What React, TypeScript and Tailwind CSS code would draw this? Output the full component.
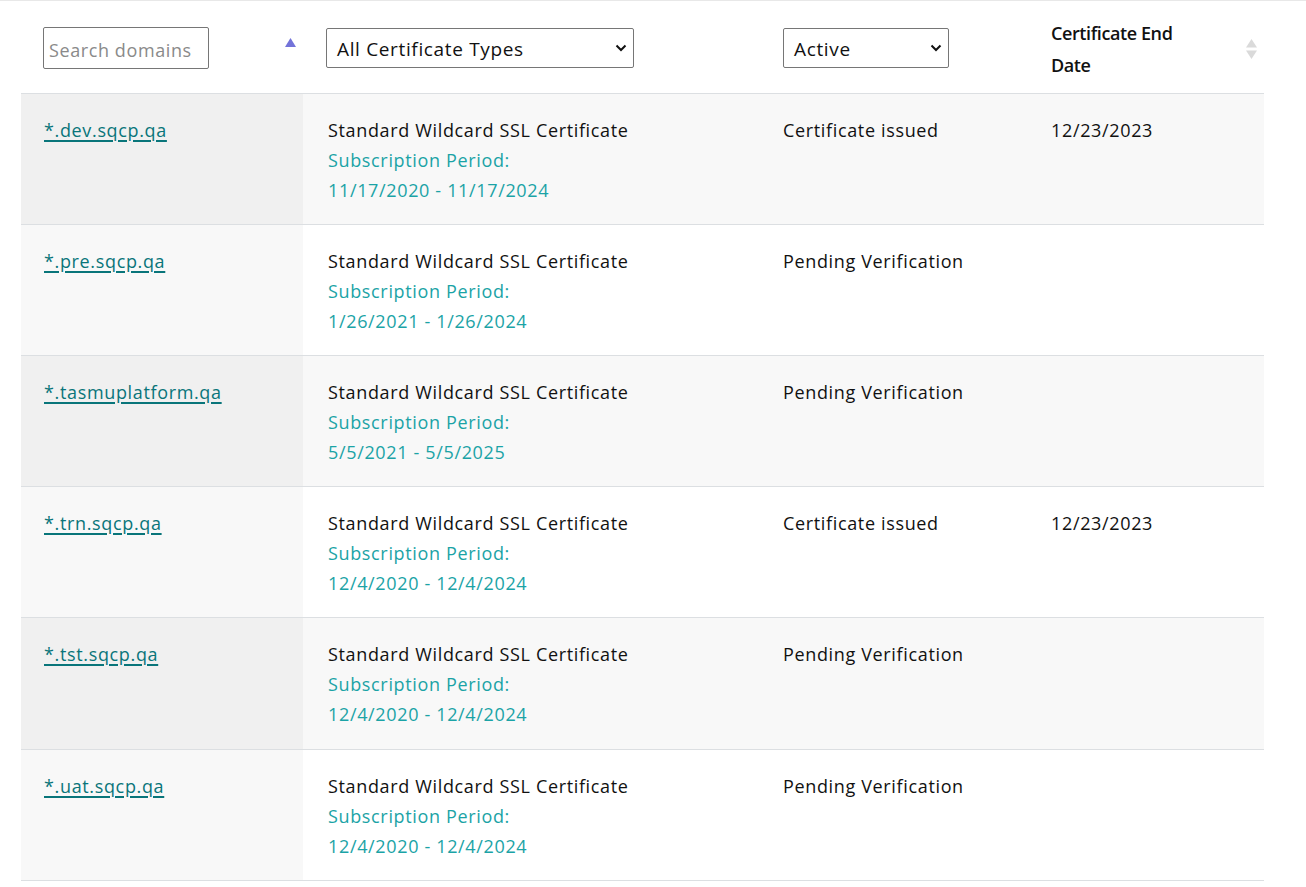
import React from "react";

const rows = [
  { d: "*.dev.sqcp.qa", p: "11/17/2020 - 11/17/2024", s: "Certificate issued", e: "12/23/2023" },
  { d: "*.pre.sqcp.qa", p: "1/26/2021 - 1/26/2024", s: "Pending Verification", e: "" },
  { d: "*.tasmuplatform.qa", p: "5/5/2021 - 5/5/2025", s: "Pending Verification", e: "" },
  { d: "*.trn.sqcp.qa", p: "12/4/2020 - 12/4/2024", s: "Certificate issued", e: "12/23/2023" },
  { d: "*.tst.sqcp.qa", p: "12/4/2020 - 12/4/2024", s: "Pending Verification", e: "" },
  { d: "*.uat.sqcp.qa", p: "12/4/2020 - 12/4/2024", s: "Pending Verification", e: "" },
];

function Chevron() {
  return (
    <svg width="12" height="8" viewBox="0 0 12 8" className="pointer-events-none absolute right-[7px] top-1/2 -translate-y-1/2">
      <path d="M1.5 1.5 L6 6 L10.5 1.5" fill="none" stroke="#111" strokeWidth="2" />
    </svg>
  );
}

export default function App() {
  return (
    <div
      className="min-h-[887px] w-full border-t border-[#e8e8e8] bg-white text-[18px] tracking-[0.65px] text-[#2b2b2b]"
      style={{ fontFamily: "'Open Sans', 'Liberation Sans', sans-serif" }}
    >
      <div className="ml-[21px] w-[1243px]">
        {/* header */}
        <div className="flex h-[93px] border-b border-[#dcdfe2]">
          <div className="flex w-[282px] items-center justify-between pl-[22px] pr-[7px]">
            <input
              placeholder="Search domains"
              className="mt-[2px] h-[42px] w-[166px] rounded-[2px] border border-[#767676] pl-[5px] pr-[2px] pt-[3px] text-[18px] tracking-[0.6px] text-[#2b2b2b] outline-none placeholder:text-[#8a8a8a]"
            />
            <svg width="11" height="9" viewBox="0 0 11 9" className="mb-[10px]">
              <path d="M5.5 0 L11 9 L0 9 Z" fill="#7373d9" />
            </svg>
          </div>
          <div className="flex w-[457px] items-center pl-[23px]">
            <div className="relative mt-[2px]">
              <div className="flex h-[40px] w-[308px] items-center rounded-[2px] border border-[#767676] pl-[10px] pt-[3px] text-[19px] text-[#111]">
                All Certificate Types
              </div>
              <Chevron />
            </div>
          </div>
          <div className="flex w-[268px] items-center pl-[23px]">
            <div className="relative mt-[2px]">
              <div className="flex h-[40px] w-[166px] items-center rounded-[2px] border border-[#767676] pl-[10px] pt-[3px] text-[19px] text-[#111]">
                Active
              </div>
              <Chevron />
            </div>
          </div>
          <div className="flex w-[236px] items-center justify-between pl-[23px] pr-[7px]">
            <div className="mt-[3px] text-[18px] font-semibold leading-[32px] tracking-[-0.4px] text-[#111]">
              Certificate End
              <br />
              Date
            </div>
            <svg width="11" height="20" viewBox="0 0 11 20" className="mt-[4px]">
              <path d="M5.5 0 L11 8.5 L0 8.5 Z" fill="#dadada" />
              <path d="M5.5 20 L11 11.5 L0 11.5 Z" fill="#dadada" />
            </svg>
          </div>
        </div>
        {rows.map((r, i) => {
          const odd = i % 2 === 0;
          return (
            <div
              key={r.d}
              className={`flex border-b border-[#dcdfe2] leading-[30px] ${i === 4 ? "h-[132px]" : "h-[131px]"} ${odd ? "bg-[#f8f8f8]" : "bg-white"}`}
            >
              <div className={`w-[282px] pl-[23px] pt-[21px] ${odd ? "bg-[#f0f0f0]" : "bg-[#f8f8f8]"}`}>
                <a href="#" className="text-[#09757a] underline decoration-[2px] underline-offset-[3px]">
                  {r.d}
                </a>
              </div>
              <div className="w-[457px] pl-[25px] pt-[21px]">
                <div className="text-[#111]">Standard Wildcard SSL Certificate</div>
                <div className="text-[#1ba3a6]">Subscription Period:</div>
                <div className="text-[#1ba3a6]">{r.p}</div>
              </div>
              <div className="w-[268px] pl-[23px] pt-[21px] text-[#111]">{r.s}</div>
              <div className="w-[236px] pl-[23px] pt-[21px] text-[#111]">{r.e}</div>
            </div>
          );
        })}
      </div>
    </div>
  );
}
